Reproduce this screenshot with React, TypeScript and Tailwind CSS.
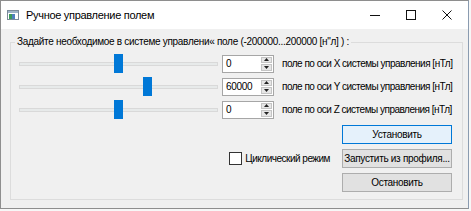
import React from "react";

const MIN = -200000;
const MAX = 200000;

type Axis = { name: string; value: number };

const axes: Axis[] = [
  { name: "X", value: 0 },
  { name: "Y", value: 60000 },
  { name: "Z", value: 0 },
];

function Slider({ value }: { value: number }) {
  const f = (value - MIN) / (MAX - MIN);
  return (
    <div className="relative w-[199px] h-[19px] flex items-center">
      <div className="w-full h-[4px] bg-[#e7eaea] border border-[#d9d9d9]" />
      <div
        className="absolute top-0 w-[9px] h-[19px] bg-[#0078d7]"
        style={{ left: Math.round(f * (199 - 9)) }}
      />
    </div>
  );
}

function SpinBox({ value }: { value: number }) {
  return (
    <div className="flex w-[52px] h-[18px] bg-white border border-[#a6a6a6]">
      <div className="flex-1 pl-[3px] leading-[16px]">{value}</div>
      <div className="flex flex-col w-[11px] my-[1px] mr-[1px] gap-[1px]">
        <div className="flex-1 flex items-center justify-center bg-[#e6e6e6] border border-[#c4c4c4]">
          <svg width="5" height="3" viewBox="0 0 5 3">
            <path d="M0 3 L2.5 0 L5 3 Z" fill="#222" />
          </svg>
        </div>
        <div className="flex-1 flex items-center justify-center bg-[#e6e6e6] border border-[#c4c4c4]">
          <svg width="5" height="3" viewBox="0 0 5 3">
            <path d="M0 0 L2.5 3 L5 0 Z" fill="#222" />
          </svg>
        </div>
      </div>
    </div>
  );
}

function Btn({ children, primary }: { children: React.ReactNode; primary?: boolean }) {
  return (
    <button
      className={
        primary
          ? "w-[110px] h-[19px] bg-[#e5f1fb] border border-[#0078d7] text-center leading-[17px] whitespace-nowrap"
          : "w-[110px] h-[19px] bg-[#e1e1e1] border border-[#adadad] text-center leading-[17px] whitespace-nowrap"
      }
    >
      {children}
    </button>
  );
}

function AppIcon() {
  return (
    <svg width="12" height="10" viewBox="0 0 12 10">
      <rect x="0.5" y="0.5" width="11" height="9" fill="#fff" stroke="#7a8a9a" />
      <rect x="1" y="1" width="10" height="2" fill="#9fb4c8" />
      <rect x="2" y="4" width="3" height="5" fill="#3c9a5a" />
      <rect x="5" y="4" width="3" height="5" fill="#4f7fbf" />
    </svg>
  );
}

export default function App() {
  return (
    <div className="w-[471px] h-[211px] bg-[#f7f7f7]" style={{ fontFamily: '"Liberation Sans", Arial, sans-serif' }}>
      <div className="w-[469px] h-[209px] border border-[#8e8e8e] border-r-[#8a9bb0] bg-[#f0f0f0] flex flex-col">
        <div className="h-[28px] bg-white flex items-center shrink-0">
          <div className="ml-[6px] w-[12px] flex items-center">
            <AppIcon />
          </div>
          <div className="ml-[7px] text-[11px] tracking-[-0.3px] text-black whitespace-nowrap">Ручное управление полем</div>
          <div className="ml-auto flex items-center h-full">
            <div className="w-[36px] flex justify-center">
              <svg width="10" height="10" viewBox="0 0 10 10">
                <path d="M0 5.5 H10" stroke="#111" strokeWidth="1" />
              </svg>
            </div>
            <div className="w-[36px] flex justify-center">
              <svg width="10" height="10" viewBox="0 0 10 10">
                <rect x="0.5" y="0.5" width="9" height="9" fill="none" stroke="#111" strokeWidth="1" />
              </svg>
            </div>
            <div className="w-[36px] mr-[3px] flex justify-center">
              <svg width="10" height="10" viewBox="0 0 10 10">
                <path d="M0.5 0.5 L9.5 9.5 M9.5 0.5 L0.5 9.5" stroke="#111" strokeWidth="1" />
              </svg>
            </div>
          </div>
        </div>

        <div className="pt-[7px] pl-[9px]">
          <fieldset className="w-[453px] h-[164px] border border-[#dcdcdc] text-[10px] tracking-[-0.3px] text-black whitespace-nowrap">
            <legend className="ml-[4px] px-[2px] leading-[12px]">
              Задайте необходимое в системе управлени« поле (-200000...200000 [н"л] ) :
            </legend>
            <div className="pl-[8px] pt-[4px] flex flex-col">
              {axes.map((a) => (
                <div key={a.name} className="flex items-center h-[23px]">
                  <Slider value={a.value} />
                  <div className="ml-[4px]">
                    <SpinBox value={a.value} />
                  </div>
                  <div className="ml-[8px] tracking-[-0.5px]">поле по оси {a.name} системы управления [нТл]</div>
                </div>
              ))}
            </div>
            <div className="pr-[10px] pt-[4px] flex flex-col items-end gap-[5px]">
              <Btn primary>Установить</Btn>
              <div className="flex items-center">
                <div className="w-[13px] h-[13px] bg-white border border-[#333]" />
                <div className="ml-[3px] mr-[12px] tracking-[-0.5px]">Циклический режим</div>
                <Btn>Запустить из профиля...</Btn>
              </div>
              <Btn>Остановить</Btn>
            </div>
          </fieldset>
        </div>
      </div>
    </div>
  );
}
